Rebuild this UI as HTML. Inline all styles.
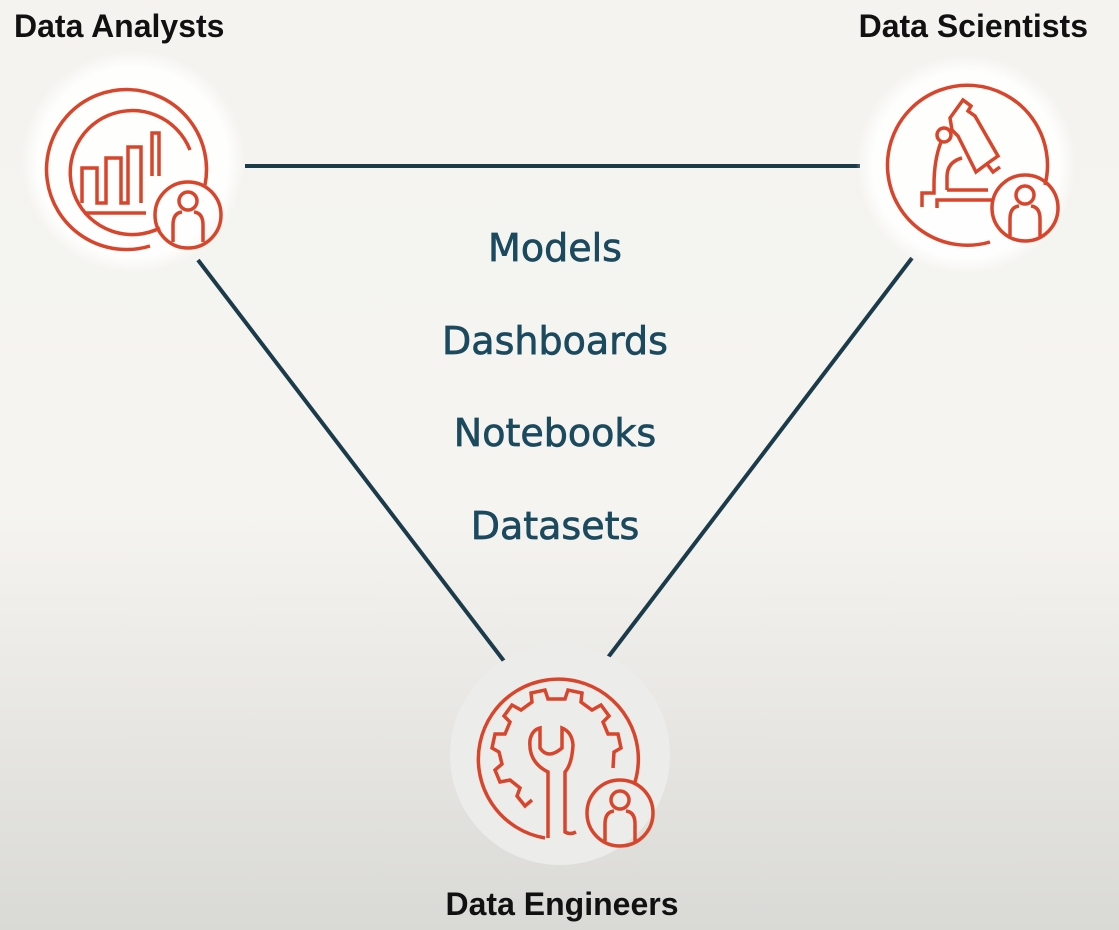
<!DOCTYPE html>
<html><head><meta charset="utf-8"><style>
html,body{margin:0;padding:0}
body{width:1119px;height:930px;overflow:hidden;background:linear-gradient(#f4f3ef 0%,#f5f4f0 55%,#e6e5e1 80%,#d9d9d6 100%);font-family:"Liberation Sans",sans-serif}
svg{position:absolute;left:0;top:0}
</style></head><body>
<svg width="1119" height="930" viewBox="0 0 1119 930">
<defs><radialGradient id="g" cx="50%" cy="50%" r="50%"><stop offset="85%" stop-color="#ffffff" stop-opacity="0.9"/><stop offset="100%" stop-color="#ffffff" stop-opacity="0"/></radialGradient></defs>
<g stroke="#1c3b4a" stroke-width="4" fill="none">
<line x1="245" y1="166" x2="860" y2="166"/>
<line x1="198" y1="260" x2="507" y2="665"/>
<line x1="912" y1="258" x2="606" y2="660"/>
</g>
<circle cx="133" cy="162" r="112" fill="url(#g)"/>
<circle cx="966" cy="165" r="110" fill="url(#g)"/>
<circle cx="560" cy="755" r="110" fill="#ececea"/>
<g stroke="#d9452b" stroke-width="3.5" fill="none" stroke-linejoin="miter">
<!-- analyst -->
<path d="M150 246 A80 80 0 1 1 205 185"/>
<path d="M160 228 A62 62 0 1 1 190 150"/>
<circle cx="188" cy="215" r="33"/>
<path d="M82 203 V168 H97 V203 H106 V158 H121 V203 H128 V147 H141 V203 M152 176 V133 H159 V176"/>
<line x1="84" y1="213" x2="146" y2="213"/>
<circle cx="188" cy="201" r="9"/>
<path d="M173 242 V225 Q173 213 182 212 M203 242 V225 Q203 213 194 212"/>
<!-- scientist -->
<path d="M990 242 A80 80 0 1 1 1045 185"/>
<circle cx="1025" cy="208" r="33"/>
<circle cx="1025" cy="195" r="9"/>
<path d="M1010 236 V219 Q1010 207 1019 206 M1040 236 V219 Q1040 207 1031 206"/>
<circle cx="944" cy="135" r="7"/>
<path d="M941 142 Q934 160 934 185 V193 H922 V207 M937 208 V200 H992 M947 190 H988 M947 190 V177 Q947 162 962 158"/>
<path d="M950 118 L963 100 L971 106 L968 111 L975 116 L998 156 L988 163 L976 172 L958 136 L952 130 Z"/>
<path d="M987 164 L993 172 L1000 167"/>
<!-- engineer -->
<path d="M545 838 A80 80 0 1 1 635 782"/>
<circle cx="620" cy="813" r="33"/>
<circle cx="620" cy="800" r="9"/>
<path d="M605 841 V824 Q605 812 614 811 M635 841 V824 Q635 812 626 811"/>
<path d="M532 800 L525 806 L517 796 L520 788 L510 780 L500 782 L495 770 L502 764 L499 752 L492 748 L495 734 L505 734 L510 722 L504 716 L512 705 L521 710 L532 702 L531 693 L545 690 L548 699 L565 699 L568 690 L582 693 L581 702 L592 710 L601 705 L609 716 L603 722 L608 734 L618 734 L621 748 L614 752 L613 768"/>
<path d="M548 838 V772 Q528 762 530 740 Q532 730 540 728 V748 Q548 760 562 748 V728 Q572 732 573 745 Q572 764 565 772 V832 Q570 835 576 832"/>
</g>
<g font-family="Liberation Sans, sans-serif" font-weight="bold" font-size="32" fill="#111">
<text x="14" y="37">Data Analysts</text>
<text x="1088" y="37" text-anchor="end">Data Scientists</text>
<text x="562" y="915" text-anchor="middle">Data Engineers</text>
</g>
<g font-family="DejaVu Sans, sans-serif" font-size="38" fill="#1b4a5e" stroke="#1b4a5e" stroke-width="0.7" text-anchor="middle">
<text x="555" y="261">Models</text>
<text x="555" y="354">Dashboards</text>
<text x="555" y="446">Notebooks</text>
<text x="555" y="539">Datasets</text>
</g>
</svg>
</body></html>
